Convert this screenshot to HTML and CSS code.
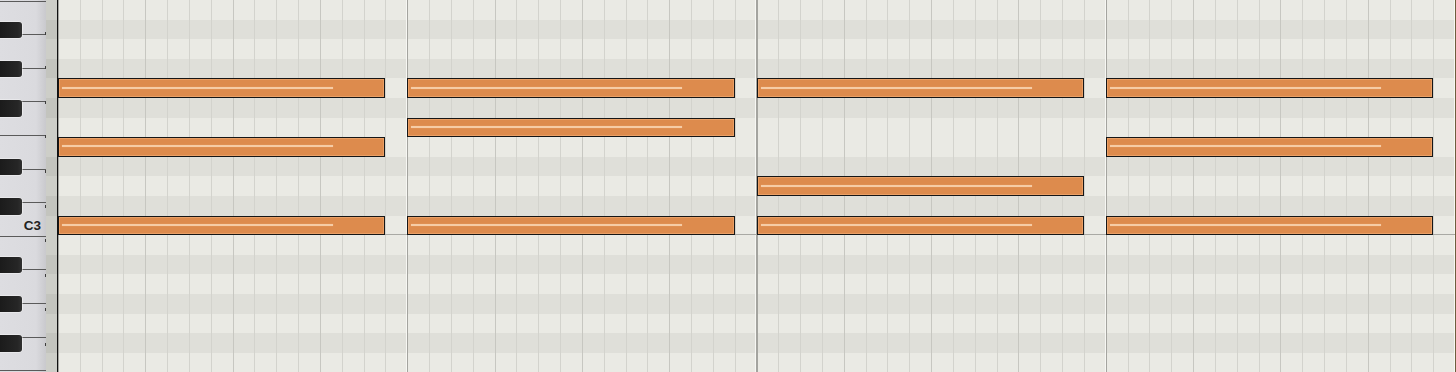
FILE: index.html
```html
<!DOCTYPE html>
<html lang="en">
<head>
    <meta charset="UTF-8">
    <meta name="viewport" content="width=device-width, initial-scale=1.0">
    <title>Piano Roll</title>
    <link rel="stylesheet" href="styles.css">
</head>
<body>

<div class="editor">
    <!-- keyboard: one row per semitone, B3 at the top down to F2 -->
    <div class="keys">
        <div class="key-row"><div class="key-cell"></div><div class="key-strip"></div></div>
        <div class="key-row black"><div class="key-cell"><div class="black-key"></div></div><div class="key-strip"></div></div>
        <div class="key-row"><div class="key-cell"></div><div class="key-strip"></div></div>
        <div class="key-row black"><div class="key-cell"><div class="black-key"></div></div><div class="key-strip"></div></div>
        <div class="key-row"><div class="key-cell"></div><div class="key-strip"></div></div>
        <div class="key-row black"><div class="key-cell"><div class="black-key"></div></div><div class="key-strip"></div></div>
        <div class="key-row"><div class="key-cell"></div><div class="key-strip"></div></div>
        <div class="key-row"><div class="key-cell"></div><div class="key-strip"></div></div>
        <div class="key-row black"><div class="key-cell"><div class="black-key"></div></div><div class="key-strip"></div></div>
        <div class="key-row"><div class="key-cell"></div><div class="key-strip"></div></div>
        <div class="key-row black"><div class="key-cell"><div class="black-key"></div></div><div class="key-strip"></div></div>
        <div class="key-row"><div class="key-cell"><span class="key-label">C3</span></div><div class="key-strip"></div></div>
        <div class="key-row"><div class="key-cell"></div><div class="key-strip"></div></div>
        <div class="key-row black"><div class="key-cell"><div class="black-key"></div></div><div class="key-strip"></div></div>
        <div class="key-row"><div class="key-cell"></div><div class="key-strip"></div></div>
        <div class="key-row black"><div class="key-cell"><div class="black-key"></div></div><div class="key-strip"></div></div>
        <div class="key-row"><div class="key-cell"></div><div class="key-strip"></div></div>
        <div class="key-row black"><div class="key-cell"><div class="black-key"></div></div><div class="key-strip"></div></div>
        <div class="key-row"><div class="key-cell"></div><div class="key-strip"></div></div>
    </div>

    <div class="roll">
        <div class="lanes">
            <div class="lane"></div>
            <div class="lane dark"></div>
            <div class="lane"></div>
            <div class="lane dark"></div>
            <div class="lane"></div>
            <div class="lane dark"></div>
            <div class="lane"></div>
            <div class="lane"></div>
            <div class="lane dark"></div>
            <div class="lane"></div>
            <div class="lane dark"></div>
            <div class="lane c-lane"></div>
            <div class="lane"></div>
            <div class="lane dark"></div>
            <div class="lane"></div>
            <div class="lane dark"></div>
            <div class="lane"></div>
            <div class="lane dark"></div>
            <div class="lane"></div>
        </div>

        <!-- bar 1: C major -->
        <div class="note bar-1 pitch-g3"><span class="velocity"></span></div>
        <div class="note bar-1 pitch-e3"><span class="velocity"></span></div>
        <div class="note bar-1 pitch-c3"><span class="velocity"></span></div>
        <!-- bar 2: Csus4 -->
        <div class="note bar-2 pitch-g3"><span class="velocity"></span></div>
        <div class="note bar-2 pitch-f3"><span class="velocity"></span></div>
        <div class="note bar-2 pitch-c3"><span class="velocity"></span></div>
        <!-- bar 3: Csus2 -->
        <div class="note bar-3 pitch-g3"><span class="velocity"></span></div>
        <div class="note bar-3 pitch-d3"><span class="velocity"></span></div>
        <div class="note bar-3 pitch-c3"><span class="velocity"></span></div>
        <!-- bar 4: C major -->
        <div class="note bar-4 pitch-g3"><span class="velocity"></span></div>
        <div class="note bar-4 pitch-e3"><span class="velocity"></span></div>
        <div class="note bar-4 pitch-c3"><span class="velocity"></span></div>
    </div>
</div>

</body>
</html>
```

FILE: styles.css
```css
body {
    margin: 0;
    padding: 0;
    overflow: hidden;
    font-family: "Liberation Sans", Arial, sans-serif;
    background: #eaeae4;
}

.editor {
    display: flex;
    height: 372px;
    overflow: hidden;
}

/* keyboard */

.keys {
    width: 57px;
    flex-shrink: 0;
    display: flex;
    flex-direction: column;
    background:
        repeating-linear-gradient(to bottom, transparent 0 31.6px, #3c3c3c 31.6px 34.6px, transparent 34.6px 33.6px) right 11px top 0 / 1.5px 100% no-repeat,
        repeating-linear-gradient(to bottom, transparent 0 0.6px, #5a5a5a 0.6px 1.6px, transparent 1.6px 33.6px),
        linear-gradient(to right, #dddde1 0, #dadade 36px, #c9c9cd 46px, #c9c9cd 100%);
}

.key-row {
    height: 19.6px;
    flex-shrink: 0;
    display: flex;
}

.key-cell {
    width: 46px;
    display: flex;
    align-items: center;
    justify-content: flex-end;
    position: relative;
}

.key-strip {
    flex: 1;
    background: #cdcec8;
}

.key-row.black .key-strip {
    background: #c3c4be;
}

.black-key {
    position: absolute;
    left: 0;
    top: 2.2px;
    width: 22px;
    height: 16.4px;
    background: linear-gradient(to right, #1b1b1b, #262626 80%, #303030);
    border-radius: 0 3px 3px 0;
    box-shadow: 0 0 0 0.6px rgba(255, 255, 255, 0.7);
}

.key-label {
    font-size: 13.5px;
    font-weight: bold;
    color: #222;
    padding-right: 5px;
    padding-top: 1px;
}

/* note grid */

.roll {
    flex: 1;
    display: grid;
    grid-template-columns: repeat(64, 1fr);
    grid-template-rows: repeat(19, 19.6px);
    border-left: 1px solid #111;
    border-right: 1px solid #6e5e3e;
}

.lanes {
    grid-area: 1 / 1 / -1 / -1;
    display: flex;
    flex-direction: column;
    box-shadow: inset 1px 0 0 #b69a5c;
}

.lane {
    height: 19.6px;
    flex-shrink: 0;
    background-color: #eaeae4;
    background-image:
        repeating-linear-gradient(to right, transparent 0 348.25px, #f7f7f3 348.25px 349.25px),
        repeating-linear-gradient(to right, #a4a49f 0 1.2px, transparent 1.2px 349.25px),
        repeating-linear-gradient(to right, #c7c7c1 0 1px, transparent 1px 87.3125px),
        repeating-linear-gradient(to right, #d3d3cd 0 1px, transparent 1px 21.828125px);
}

.lane.dark {
    background-color: #dfdfd9;
}

.c-lane {
    box-shadow: inset 0 -1px 0 #a9a9a4;
}

.note {
    display: flex;
    align-items: center;
    box-sizing: border-box;
    padding: 0 0 1px 3px;
    background: #dd8b4d;
    border: 1px solid #161616;
    box-shadow: inset 0 0 0 1px #eaa066;
}

.velocity {
    width: 271px;
    height: 2px;
    background: #f6cca6;
    box-shadow: 0 0 1px #f2b888;
}

.bar-1 { grid-column: 1 / span 15; }
.bar-2 { grid-column: 17 / span 15; }
.bar-3 { grid-column: 33 / span 15; }
.bar-4 { grid-column: 49 / span 15; }

.pitch-g3 { grid-row: 5; }
.pitch-f3 { grid-row: 7; }
.pitch-e3 { grid-row: 8; }
.pitch-d3 { grid-row: 10; }
.pitch-c3 { grid-row: 12; }
```
